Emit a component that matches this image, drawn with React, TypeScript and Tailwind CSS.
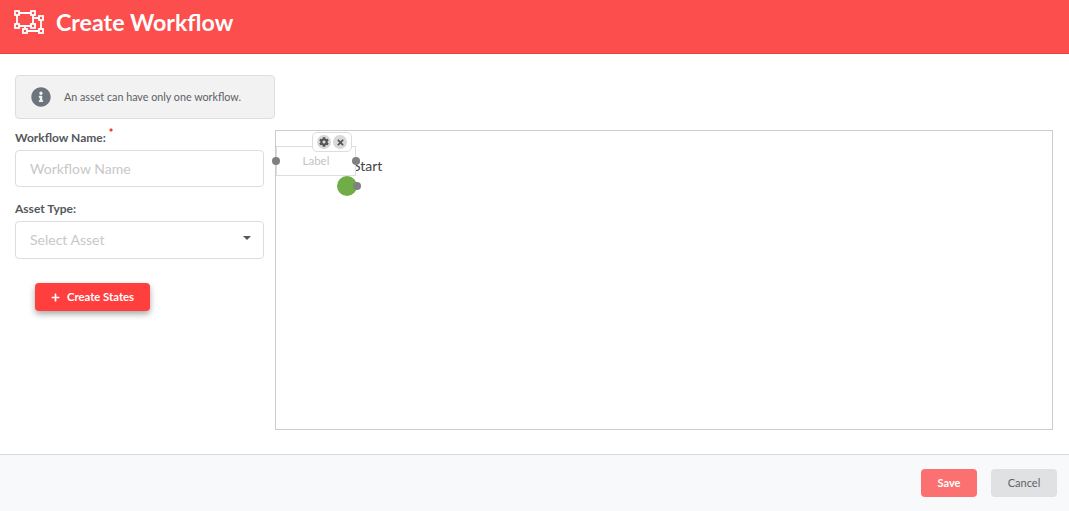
import { FaCog, FaInfoCircle, FaPlus, FaTimes } from "react-icons/fa";

function WorkflowIcon() {
  const handles = [
    [3, 3],
    [19, 3],
    [3, 16],
    [19, 16],
    [27, 8],
    [27, 21],
    [11, 21],
  ];
  return (
    <svg width="31" height="25" viewBox="0 0 31 25" fill="none" stroke="white" strokeWidth="1.800">
      <path d="M3 3H19V16H3Z" />
      <path d="M19 8H27V21H11V16" />
      {handles.map(([x, y]) => (
        <rect key={`${x}-${y}`} x={x - 2} y={y - 2} width="4" height="4" fill="#fc4e4c" />
      ))}
    </svg>
  );
}

export default function App() {
  return (
    <div className="w-[1069px] h-[511px] flex flex-col bg-white overflow-hidden font-['Lato','Noto_Sans',sans-serif] text-[#54585c]">
      <header className="h-[54px] shrink-0 flex items-start pt-[10px] pl-[14px] gap-[11px] bg-[#fc4e4c] border-b border-[#e04644] text-white">
        <WorkflowIcon />
        <h1 className="text-[23.200px] leading-[25px] font-bold">Create Workflow</h1>
      </header>

      <main className="flex-1 flex pt-[21px] pl-[15px]">
        <div className="w-[260px] shrink-0 flex flex-col">
          <div className="h-[44px] flex items-center pl-[15px] gap-[13px] bg-[#f2f2f2] border border-[#dedede] rounded-[4px]">
            <FaInfoCircle className="w-[20px] h-[20px] text-[#6c757d]" />
            <span className="text-[10.750px] text-[#5c6166]">An asset can have only one workflow.</span>
          </div>

          <label className="mt-[11px] text-[12px] leading-[15px] font-bold">
            Workflow Name: <sup className="text-[#ee2222] text-[11px] leading-none font-black">*</sup>
          </label>
          <div className="mt-[5px] w-[249px] h-[37px] flex items-center px-[14px] border border-[#dddddd] rounded-[4px] text-[14px] text-[#c8c8c8]">
            Workflow Name
          </div>

          <label className="mt-[14px] text-[12px] leading-[15px] font-bold">Asset Type:</label>
          <div className="mt-[5px] w-[249px] h-[38px] flex items-center justify-between pl-[14px] pr-[12px] border border-[#dddddd] rounded-[4px] text-[14px] text-[#c8c8c8]">
            <span className="mb-[1px]">Select Asset</span>
            <span className="mb-[4px] border-x-[4px] border-t-[4px] border-x-transparent border-t-[#54585c]" />
          </div>

          <button className="mt-[24px] ml-[20px] w-[115px] h-[28px] flex items-center justify-center gap-[7px] pt-[1px] bg-[#ff3e3e] rounded-[4px] text-white text-[11.300px] font-bold shadow-[0_3px_6px_rgba(0,0,0,0.35)]">
            <FaPlus className="w-[9px] h-[9px]" />
            Create States
          </button>
        </div>

        <div className="relative mt-[55px] w-[778px] h-[300px] border border-[#cccccc]">
          <span className="absolute left-[77px] top-[25px] text-[14px] leading-[20px] text-[#444444]">Start</span>
          <div className="absolute left-0 top-[15px] w-[80px] h-[30px] flex items-center justify-center pb-[1px] bg-white border border-[#dddddd] text-[11.500px] text-[#c4c4c4]">
            Label
          </div>
          <div className="absolute left-[36px] top-[1px] w-[40px] h-[20px] flex items-center justify-center gap-[2px] bg-white border border-[#dddddd] rounded-[5px]">
            <span className="w-[14px] h-[14px] flex items-center justify-center rounded-full bg-[#d8d8d8]">
              <FaCog className="w-[10px] h-[10px] text-[#555555]" />
            </span>
            <span className="w-[14px] h-[14px] flex items-center justify-center rounded-full bg-[#d8d8d8]">
              <FaTimes className="w-[9px] h-[9px] text-[#555555]" />
            </span>
          </div>
          <span className="absolute left-[-4px] top-[26px] w-[8px] h-[8px] rounded-full bg-[#808080]" />
          <span className="absolute left-[76px] top-[26px] w-[8px] h-[8px] rounded-full bg-[#808080]" />
          <span className="absolute left-[61px] top-[45px] w-[20px] h-[20px] rounded-full bg-[#70ad47]" />
          <span className="absolute left-[77px] top-[51px] w-[8px] h-[8px] rounded-full bg-[#808080]" />
        </div>
      </main>

      <footer className="h-[57px] shrink-0 flex items-start justify-end gap-[14px] pt-[14px] pr-[12px] bg-[#f8f9fb] border-t border-[#d9dbde]">
        <button className="w-[56px] h-[28px] bg-[#fb7070] rounded-[4px] text-white text-[11px] font-bold">Save</button>
        <button className="w-[66px] h-[28px] bg-[#e0e1e3] rounded-[4px] text-[#5c6166] text-[11px]">Cancel</button>
      </footer>
    </div>
  );
}
